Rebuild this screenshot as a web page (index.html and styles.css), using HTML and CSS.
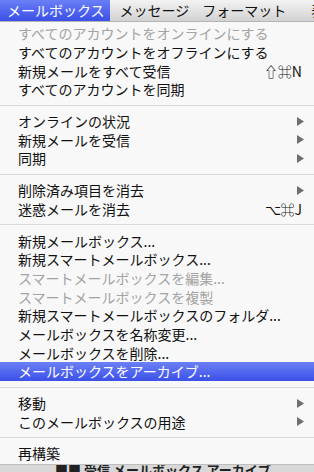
FILE: index.html
```html
<!DOCTYPE html>
<html lang="ja">

<head>
    <meta charset="UTF-8">
    <meta name="viewport" content="width=device-width, initial-scale=1.0">
    <title>メールボックス</title>
    <link rel="stylesheet" href="styles.css">
</head>

<body>

    <!-- Menu bar -->
    <div class="menubar">
        <span class="menu-title active">メールボックス</span>
        <span class="menu-title">メッセージ</span>
        <span class="menu-title">フォーマット</span>
        <span class="menu-title last">表示</span>
    </div>

    <!-- Dropdown -->
    <ul class="menu">
        <li class="item disabled"><span>すべてのアカウントをオンラインにする</span></li>
        <li class="item"><span>すべてのアカウントをオフラインにする</span></li>
        <li class="item"><span>新規メールをすべて受信</span><span class="shortcut">⇧⌘N</span></li>
        <li class="item"><span>すべてのアカウントを同期</span></li>
        <li class="sep"></li>
        <li class="item"><span>オンラインの状況</span><svg class="arrow" width="7" height="9" viewBox="0 0 7 9"><polygon points="0,0 7,4.5 0,9" /></svg></li>
        <li class="item"><span>新規メールを受信</span><svg class="arrow" width="7" height="9" viewBox="0 0 7 9"><polygon points="0,0 7,4.5 0,9" /></svg></li>
        <li class="item"><span>同期</span><svg class="arrow" width="7" height="9" viewBox="0 0 7 9"><polygon points="0,0 7,4.5 0,9" /></svg></li>
        <li class="sep"></li>
        <li class="item"><span>削除済み項目を消去</span><svg class="arrow" width="7" height="9" viewBox="0 0 7 9"><polygon points="0,0 7,4.5 0,9" /></svg></li>
        <li class="item"><span>迷惑メールを消去</span><span class="shortcut">⌥⌘J</span></li>
        <li class="sep"></li>
        <li class="item"><span>新規メールボックス...</span></li>
        <li class="item"><span>新規スマートメールボックス...</span></li>
        <li class="item disabled"><span>スマートメールボックスを編集...</span></li>
        <li class="item disabled"><span>スマートメールボックスを複製</span></li>
        <li class="item"><span>新規スマートメールボックスのフォルダ...</span></li>
        <li class="item"><span>メールボックスを名称変更...</span></li>
        <li class="item"><span>メールボックスを削除...</span></li>
        <li class="item selected"><span>メールボックスをアーカイブ...</span></li>
        <li class="sep"></li>
        <li class="item"><span>移動</span><svg class="arrow" width="7" height="9" viewBox="0 0 7 9"><polygon points="0,0 7,4.5 0,9" /></svg></li>
        <li class="item"><span>このメールボックスの用途</span><svg class="arrow" width="7" height="9" viewBox="0 0 7 9"><polygon points="0,0 7,4.5 0,9" /></svg></li>
        <li class="sep"></li>
        <li class="item"><span>再構築</span></li>
    </ul>

    <!-- Window content peeking out below the menu -->
    <div class="behind">
        <span class="behind-text">■■ 受信 メールボックス アーカイブ</span>
    </div>

</body>

</html>
```

FILE: styles.css
```css
* {
    box-sizing: border-box;
    margin: 0;
    padding: 0;
}

body {
    width: 314px;
    height: 472px;
    overflow: hidden;
    background: #f8f8f8;
    font-family: "Noto Sans CJK JP", "Noto Sans", sans-serif;
    color: #111;
}

.menubar {
    display: flex;
    height: 22px;
    align-items: center;
    background: linear-gradient(#f3f3f3, #d2d2d2);
    border-bottom: 1px solid #b4b4b4;
    font-size: 14px;
    white-space: nowrap;
    overflow: hidden;
}

.menu-title {
    height: 100%;
    line-height: 21px;
    padding: 0 3px 0 10px;
}

.menu-title.active {
    padding: 0 5px 0 7px;
    color: #fff;
    background: linear-gradient(#6a7ff6, #3a4fe7);
}

.menu-title.last {
    padding-left: 22px;
}

.menu {
    list-style: none;
    padding: 2px 0 1px;
    background: #f8f8f8;
    font-size: 14px;
}

.item {
    display: flex;
    align-items: center;
    justify-content: space-between;
    height: 18.7px;
    padding: 0 10px 0 18px;
    white-space: nowrap;
}

.item.disabled {
    color: #a3a3a3;
}

.item.selected {
    color: #fff;
    background: linear-gradient(#6c80f6, #3b50e8);
}

.shortcut {
    margin-right: 2px;
}

.arrow {
    fill: #6f6f6f;
}

.sep {
    height: 13px;
    display: flex;
    align-items: center;
}

.sep::after {
    content: "";
    display: block;
    width: 100%;
    height: 1px;
    background: #dadada;
}

.behind {
    height: 8px;
    background: #d8d8d8;
    border-top: 1px solid #bdbdbd;
    overflow: hidden;
    padding-left: 55px;
}

.behind-text {
    display: block;
    font-size: 13px;
    font-weight: bold;
    line-height: 10px;
    color: #222;
    white-space: nowrap;
}
```
